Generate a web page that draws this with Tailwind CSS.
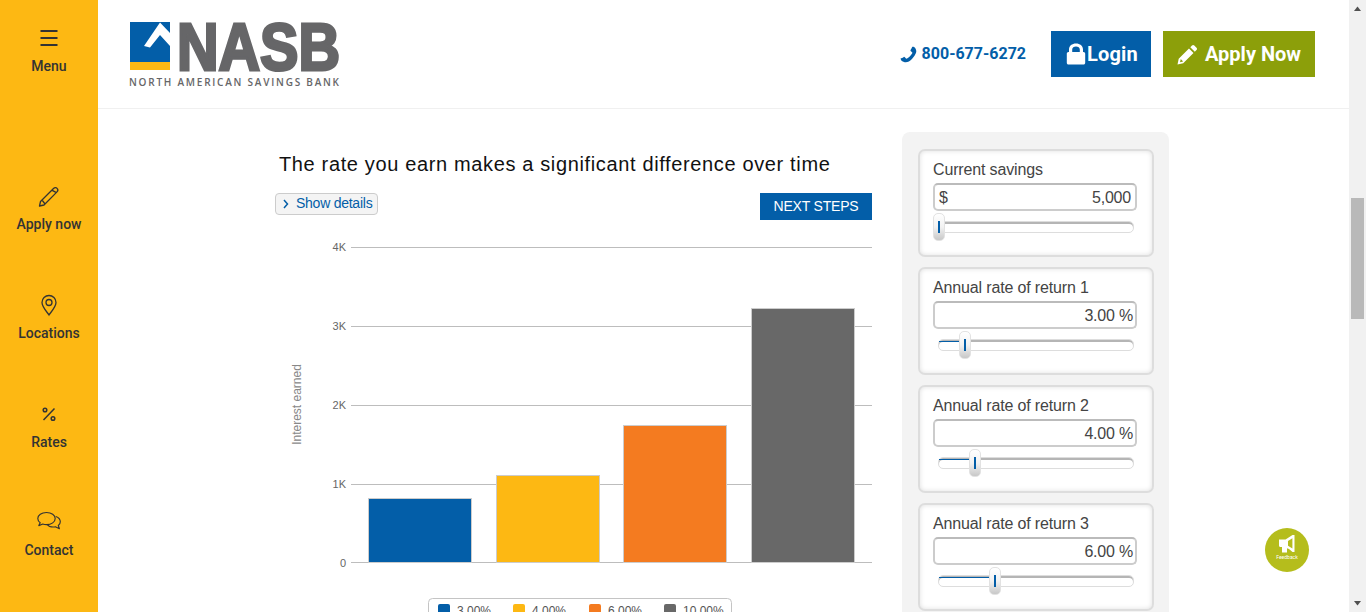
<!DOCTYPE html>
<html lang="en">
<head>
<meta charset="utf-8">
<title>NASB</title>
<script src="https://cdn.jsdelivr.net/npm/@tailwindcss/browser@4"></script>
</head>
<body class="h-[612px] w-[1366px] overflow-hidden bg-white font-['Liberation_Sans',Arial,sans-serif] text-[#444]">
<div class="relative flex h-[612px] w-[1366px] overflow-hidden">

  <aside class="flex h-full w-[98px] shrink-0 flex-col items-center bg-[#fdb813] font-['Roboto',sans-serif] text-[14px] font-medium leading-[18px] text-[#333]">
    <div class="mt-[26px] flex flex-col items-center">
      <svg class="h-[24px] w-[24px]" viewBox="0 0 24 24" fill="none" stroke="#333" stroke-width="2"><path d="M3.500 5h17M3.500 12h17M3.500 19h17"/></svg>
      <span class="mt-[7px]">Menu</span>
    </div>
    <div class="mt-[109px] flex flex-col items-center">
      <svg class="h-[24px] w-[24px]" viewBox="0 0 24 24" fill="none" stroke="#333" stroke-width="1.300" stroke-linejoin="round"><path d="M3.500 17.500 16.500 4.500c1.300-1.300 2.800-1 3.600-.1.900.9 1.100 2.200-.1 3.500L7 21l-4.500 1zM14.800 6.200l4.600 2.400M5 16l3 4"/></svg>
      <span class="mt-[7px] whitespace-nowrap">Apply now</span>
    </div>
    <div class="mt-[60px] flex flex-col items-center">
      <svg class="h-[24px] w-[24px]" viewBox="0 0 24 24" fill="none" stroke="#333" stroke-width="1.300"><path d="M12 22c-1.500-2.500-7-8-7-12.500a7 7 0 0 1 14 0C19 14 13.500 19.500 12 22z"/><circle cx="12" cy="9.500" r="3"/></svg>
      <span class="mt-[7px]">Locations</span>
    </div>
    <div class="mt-[60px] flex flex-col items-center">
      <svg class="h-[24px] w-[24px]" viewBox="0 0 24 24" fill="none" stroke="#333" stroke-width="1.500"><path d="M6.500 18 17.500 6.500"/><circle cx="8" cy="8" r="1.800"/><circle cx="16" cy="16.500" r="1.800"/></svg>
      <span class="mt-[7px]">Rates</span>
    </div>
    <div class="mt-[59px] flex flex-col items-center">
      <svg class="h-[24px] w-[24px]" viewBox="0 0 24 24" fill="none" stroke="#333" stroke-width="1.150" stroke-linejoin="round"><path d="M9.500 2.500C4.500 2.500.8 5 .8 8.500c0 1.700.9 3.200 2.400 4.300L1.800 15.600l4-1.600c1.100.4 2.400.6 3.700.6 5 0 8.700-2.600 8.700-6.100S14.500 2.500 9.500 2.500z"/><path d="M18.800 6.500c2.800 1 4.500 2.900 4.500 5.200 0 1.500-.8 2.800-2 3.800l1.100 3.200-4-1.900c-3.300.6-6.600-.3-8.400-2.500"/></svg>
      <span class="mt-[7px]">Contact</span>
    </div>
  </aside>

  <div class="flex h-full flex-1 flex-col">
    <header class="flex h-[109px] shrink-0 items-center justify-between border-b border-[#f0f0f0] pl-[31px] pr-[34px]">
      <svg class="mt-[3px] h-[70px] w-[214px]" viewBox="0 0 214 70">
        <rect x="1" y="1" width="40" height="40" fill="#035ea8"/>
        <rect x="1" y="41" width="40" height="8" fill="#fdb813"/>
        <polygon points="31,1.500 15,25 21,26.500 31,14 41,25 41,12" fill="#fff"/>
        <text x="48" y="48.500" font-family="Liberation Sans" font-weight="700" font-size="66" fill="#666668" stroke="#666668" stroke-width="3" stroke-linejoin="miter" textLength="163" lengthAdjust="spacingAndGlyphs">NASB</text>
        <text x="0" y="64.500" font-family="Open Sans" font-size="10" font-weight="600" fill="#666668" textLength="210">NORTH AMERICAN SAVINGS BANK</text>
      </svg>
      <div class="flex items-center font-['Roboto',sans-serif]">
        <svg class="mr-[5px] h-[17px] w-[17px] -scale-x-100" viewBox="0 0 24 24" fill="#035ea8"><path d="M23 17.500c0 .6-.2 1.400-.4 2.100-.4 1.100-2.300 2.200-3.500 2.700C17.800 22.800 16.900 23 15.900 23c-3 0-6-2-8.400-4.300C4.800 16.100 1 10.800 1 7.500 1 6.100 1.400 4.900 2 3.800 2.600 2.600 3.700 1.300 5.100 1.100c.4-.1 1.500-.2 1.700.2.500.9 1.900 3.700 2.400 4.600.3.600-.6 1.300-1 1.700-.6.600-1.700 1.300-1.700 2.100 0 .7 1.300 2.700 3.400 4.900 2.200 2.100 4.300 3.500 4.900 3.500.8 0 1.600-1.100 2.100-1.700.4-.5 1.100-1.300 1.700-1 .9.500 3.700 2 4.600 2.400.4.200.8.500.8.700z"/></svg>
        <span class="mr-[25px] text-[16px] font-bold text-[#035ea8]">800-677-6272</span>
        <a class="mr-[12px] flex h-[46px] w-[100px] items-center justify-center bg-[#035ea8] pl-[2px] text-[20px] font-bold tracking-[0.2px] text-white">
          <svg class="mr-[1px] h-[22px] w-[20px]" viewBox="0 0 20 22" fill="#fff"><path fill-rule="evenodd" d="M3 9V6.500C3 2.800 6 .5 10 .5s7 2.300 7 6V9h.5c1 0 1.700.8 1.700 1.700v9c0 1-.8 1.800-1.700 1.800h-15c-1 0-1.700-.8-1.700-1.800v-9C.800 9.800 1.500 9 2.500 9zm3.200 0h7.600V6.500c0-1.900-1.700-3-3.800-3s-3.800 1.100-3.800 3z"/></svg>
          Login
        </a>
        <a class="flex h-[46px] w-[152px] items-center justify-center bg-[#8c9f0a] text-[20px] font-bold text-white">
          <svg class="mr-[7px] h-[21px] w-[21px]" viewBox="0 0 21 21" fill="#fff"><path fill-rule="evenodd" d="M15 1.500c.7-.7 1.600-.7 2.300 0l2.200 2.200c.7.700.7 1.600 0 2.300l-1.700 1.700-4.500-4.500zM12 4.500l4.500 4.500L6.200 19.300.500 20.500l1.200-5.700zM3.800 15l-.8 3.200 3.100-.8z"/></svg>
          Apply Now
        </a>
      </div>
    </header>

    <main class="flex flex-1 overflow-hidden pl-[177px]">
      <section class="w-[597px] shrink-0">
        <h1 class="ml-[4px] mt-[42px] h-[26px] whitespace-nowrap text-[20px] leading-[26px] tracking-[0.64px] text-[#111]">The rate you earn makes a significant difference over time</h1>
        <div class="mt-[16px] flex items-start justify-between">
          <button class="flex h-[22px] w-[103px] items-center rounded-[4px] border border-[#ccc] bg-[#f4f4f4] pb-[1px] pl-[7px] text-[14px] tracking-[-0.25px] text-[#035ea8]">
            <svg class="mr-[7px] h-[10px] w-[6px]" viewBox="0 0 6 10" fill="none" stroke="#035ea8" stroke-width="1.500"><path d="M1 1l3.500 4L1 9"/></svg>
            Show details
          </button>
          <button class="h-[27px] w-[112px] bg-[#035ea8] text-[14px] tracking-[-0.2px] text-white">NEXT STEPS</button>
        </div>
        <svg class="mt-[17px] block h-[375px] w-[597px]" viewBox="0 0 597 375" font-family="Liberation Sans">
          <g stroke="#bdbdbd" stroke-width="1">
            <path d="M76 10.500H597M76 89.500H597M76 168.500H597M76 247.500H597M76 325.500H597"/>
          </g>
          <g fill="#666" font-size="11" text-anchor="end">
            <text x="71" y="14">4K</text>
            <text x="71" y="93">3K</text>
            <text x="71" y="172">2K</text>
            <text x="71" y="251">1K</text>
            <text x="71" y="330">0</text>
          </g>
          <text transform="translate(26 167.500) rotate(-90)" text-anchor="middle" fill="#888" font-size="12">Interest earned</text>
          <g stroke="#ccc" stroke-width="1">
            <rect x="93.500" y="261.500" width="103" height="64" fill="#035ea8"/>
            <rect x="221.500" y="238.500" width="103" height="87" fill="#fdb813"/>
            <rect x="348.500" y="188.500" width="103" height="137" fill="#f47b20"/>
            <rect x="476.500" y="71.500" width="103" height="254" fill="#686868"/>
          </g>
          <rect x="153.500" y="361.500" width="303" height="30" rx="4" fill="#fff" stroke="#c4c4c4"/>
          <g font-size="12" fill="#555">
            <rect x="163" y="367" width="12" height="12" rx="2" fill="#035ea8"/><text x="182" y="378">3.00%</text>
            <rect x="238" y="367" width="12" height="12" rx="2" fill="#fdb813"/><text x="257" y="378">4.00%</text>
            <rect x="314" y="367" width="12" height="12" rx="2" fill="#f47b20"/><text x="333" y="378">6.00%</text>
            <rect x="389" y="367" width="12" height="12" rx="2" fill="#686868"/><text x="408" y="378">10.00%</text>
          </g>
        </svg>
      </section>

      <section class="ml-[30px] mt-[23px] flex h-[600px] w-[267px] shrink-0 flex-col gap-[10px] self-start rounded-t-[8px] bg-[#f3f3f3] px-[16px] pt-[17px]">
        <div class="h-[108px] w-[236px] shrink-0 rounded-[7px] border-2 border-[#ddd] bg-white px-[13px] pt-[9px] shadow-[inset_0_0_5px_#e0e0e0]">
          <div class="h-[20px] text-[16px] leading-[20px] tracking-[-0.15px]">Current savings</div>
          <div class="mt-[3px] flex h-[28px] w-[204px] items-center justify-between rounded-[5px] border-2 border-[#ccc] border-t-[#bbb] pl-[4px] pr-[4px] pt-[1px] text-[16px] tracking-[-0.2px]"><span>$</span><span>5,000</span></div>
          <div class="relative ml-[5px] mt-[10px] h-[12px] w-[196px] rounded-[5px] border border-[#ddd] bg-white shadow-[inset_0_2px_0_#b5b5b5]">
            <div class="absolute left-[-6px] top-[-9px] flex h-[28px] w-[12px] items-center justify-center rounded-[5px] border border-[#e2e2e2] bg-gradient-to-b from-white via-[#f2f2f2] to-[#c8c8c8]"><span class="h-[12px] w-[2px] bg-[#035ea8]"></span></div>
          </div>
        </div>
        <div class="h-[108px] w-[236px] shrink-0 rounded-[7px] border-2 border-[#ddd] bg-white px-[13px] pt-[9px] shadow-[inset_0_0_5px_#e0e0e0]">
          <div class="h-[20px] text-[16px] leading-[20px] tracking-[-0.15px]">Annual rate of return 1</div>
          <div class="mt-[3px] flex h-[28px] w-[204px] items-center justify-end rounded-[5px] border-2 border-[#ccc] border-t-[#bbb] px-[2px] pt-[1px] text-[16px] tracking-[-0.2px]">3.00 %</div>
          <div class="relative ml-[5px] mt-[10px] h-[12px] w-[196px] rounded-[5px] border border-[#ddd] bg-white shadow-[inset_0_2px_0_#b5b5b5]">
            <div class="absolute left-0 top-[1px] h-[1px] w-[21px] bg-[#035ea8]"></div>
            <div class="absolute left-[20px] top-[-9px] flex h-[28px] w-[12px] items-center justify-center rounded-[5px] border border-[#e2e2e2] bg-gradient-to-b from-white via-[#f2f2f2] to-[#c8c8c8]"><span class="h-[12px] w-[2px] bg-[#035ea8]"></span></div>
          </div>
        </div>
        <div class="h-[108px] w-[236px] shrink-0 rounded-[7px] border-2 border-[#ddd] bg-white px-[13px] pt-[9px] shadow-[inset_0_0_5px_#e0e0e0]">
          <div class="h-[20px] text-[16px] leading-[20px] tracking-[-0.15px]">Annual rate of return 2</div>
          <div class="mt-[3px] flex h-[28px] w-[204px] items-center justify-end rounded-[5px] border-2 border-[#ccc] border-t-[#bbb] px-[2px] pt-[1px] text-[16px] tracking-[-0.2px]">4.00 %</div>
          <div class="relative ml-[5px] mt-[10px] h-[12px] w-[196px] rounded-[5px] border border-[#ddd] bg-white shadow-[inset_0_2px_0_#b5b5b5]">
            <div class="absolute left-0 top-[1px] h-[1px] w-[31px] bg-[#035ea8]"></div>
            <div class="absolute left-[30px] top-[-9px] flex h-[28px] w-[12px] items-center justify-center rounded-[5px] border border-[#e2e2e2] bg-gradient-to-b from-white via-[#f2f2f2] to-[#c8c8c8]"><span class="h-[12px] w-[2px] bg-[#035ea8]"></span></div>
          </div>
        </div>
        <div class="h-[108px] w-[236px] shrink-0 rounded-[7px] border-2 border-[#ddd] bg-white px-[13px] pt-[9px] shadow-[inset_0_0_5px_#e0e0e0]">
          <div class="h-[20px] text-[16px] leading-[20px] tracking-[-0.15px]">Annual rate of return 3</div>
          <div class="mt-[3px] flex h-[28px] w-[204px] items-center justify-end rounded-[5px] border-2 border-[#ccc] border-t-[#bbb] px-[2px] pt-[1px] text-[16px] tracking-[-0.2px]">6.00 %</div>
          <div class="relative ml-[5px] mt-[10px] h-[12px] w-[196px] rounded-[5px] border border-[#ddd] bg-white shadow-[inset_0_2px_0_#b5b5b5]">
            <div class="absolute left-0 top-[1px] h-[1px] w-[51px] bg-[#035ea8]"></div>
            <div class="absolute left-[50px] top-[-9px] flex h-[28px] w-[12px] items-center justify-center rounded-[5px] border border-[#e2e2e2] bg-gradient-to-b from-white via-[#f2f2f2] to-[#c8c8c8]"><span class="h-[12px] w-[2px] bg-[#035ea8]"></span></div>
          </div>
        </div>
      </section>
    </main>
  </div>

  <div class="relative h-full w-[17px] shrink-0 bg-[#f1f1f1]">
    <svg class="absolute left-[4px] top-[5px] h-[8px] w-[9px]" viewBox="0 0 9 8" fill="#505050"><path d="M4.500 1.500 8 6H1z"/></svg>
    <div class="absolute left-[2px] top-[198px] h-[121px] w-[13px] bg-[#b9b9b9]"></div>
    <svg class="absolute bottom-[5px] left-[4px] h-[8px] w-[9px]" viewBox="0 0 9 8" fill="#505050"><path d="M4.500 6.500 8 2H1z"/></svg>
  </div>

  <div class="absolute left-[1265px] top-[528px] flex h-[44px] w-[44px] flex-col items-center rounded-full bg-[#b5bd1c] pt-[6px]">
    <svg class="h-[20px] w-[20px]" viewBox="0 0 20 20" fill="#fff"><path fill-rule="evenodd" d="M2 5.500h6.500L15.500 1h2v17h-2L12 15l-2-.800V18.500H5V13H3.500C2.500 13 2 12.300 2 11.500zM15.400 4.200 11 7v4.800l4.400 2.800z"/></svg>
    <span class="font-['Roboto',sans-serif] text-[5px] leading-[7px] text-white">Feedback</span>
  </div>
</div>
</body>
</html>
